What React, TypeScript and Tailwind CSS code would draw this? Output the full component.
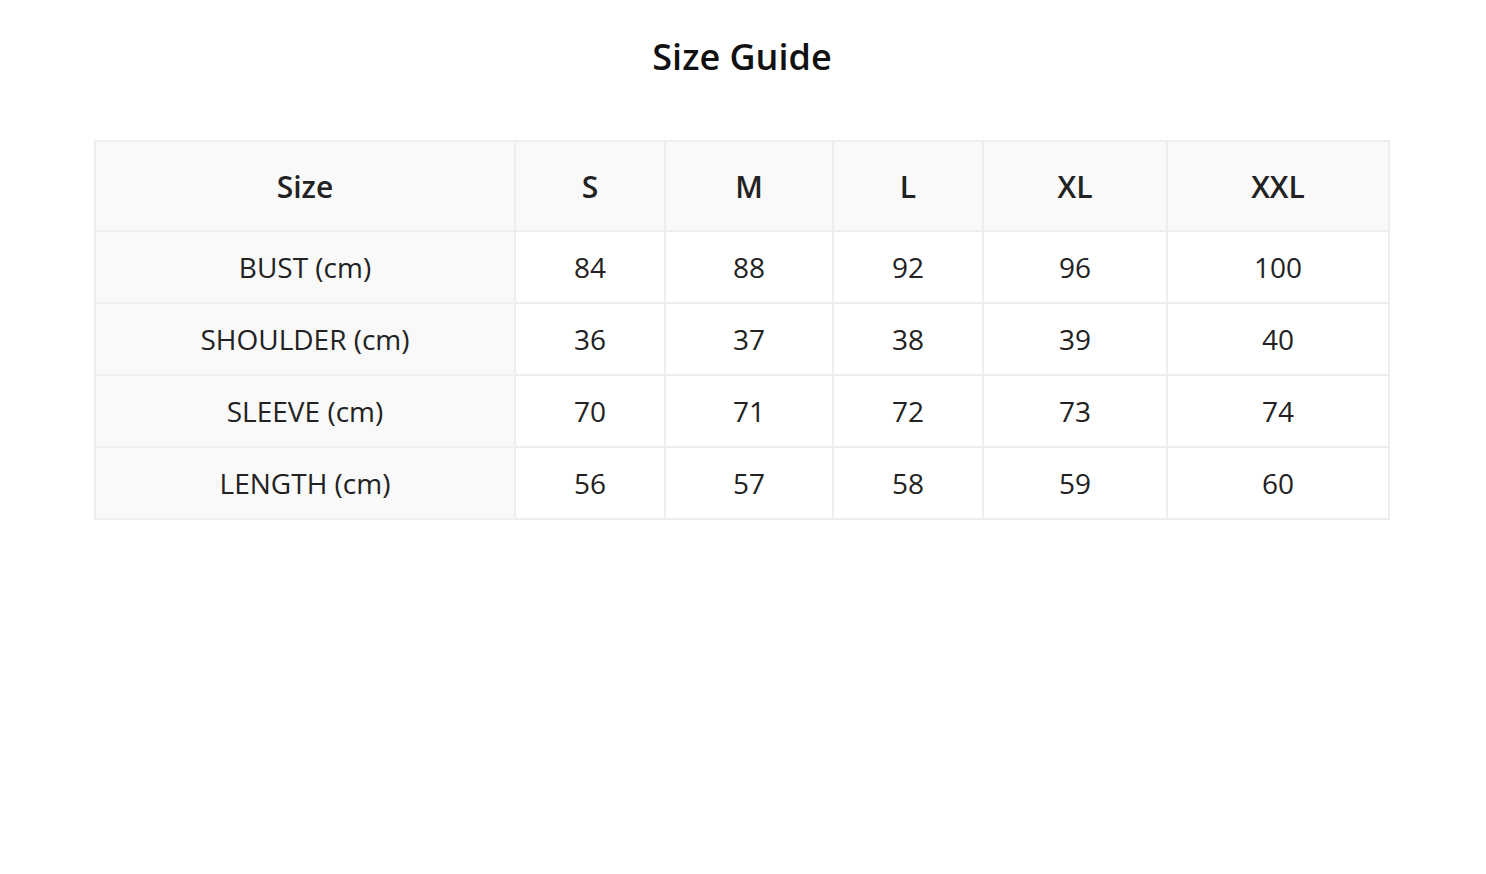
const sizes = ["S", "M", "L", "XL", "XXL"];

const rows: { label: string; values: number[] }[] = [
  { label: "BUST (cm)", values: [84, 88, 92, 96, 100] },
  { label: "SHOULDER (cm)", values: [36, 37, 38, 39, 40] },
  { label: "SLEEVE (cm)", values: [70, 71, 72, 73, 74] },
  { label: "LENGTH (cm)", values: [56, 57, 58, 59, 60] },
];

const colWidths = ["w-[420px]", "w-[150px]", "w-[168px]", "w-[150px]", "w-[184px]", "w-[222px]"];

export default function App() {
  return (
    <div className="min-h-screen bg-white pl-[94px] pr-[96px] pt-[32px] font-['Open_Sans',sans-serif]">
      <h1 className="text-center text-[36px] font-semibold leading-[50px] text-[#111]">Size Guide</h1>

      <table className="mt-[58px] w-full table-fixed border-separate border-spacing-0 border border-[#eeeeee] text-center text-[28px]">
        <colgroup>
          {colWidths.map((w, i) => (
            <col key={i} className={w} />
          ))}
        </colgroup>
        <thead>
          <tr className="h-[90px] bg-[#f9f9f9]">
            <th className="border border-[#eeeeee] text-[30px] font-semibold text-[#222]">Size</th>
            {sizes.map((s) => (
              <th key={s} className="border border-[#eeeeee] text-[30px] font-semibold text-[#222]">
                {s}
              </th>
            ))}
          </tr>
        </thead>
        <tbody>
          {rows.map((r) => (
            <tr key={r.label} className="h-[72px]">
              <td className="border border-[#eeeeee] bg-[#f9f9f9] text-[#222]">{r.label}</td>
              {r.values.map((v, i) => (
                <td key={i} className="border border-[#eeeeee] text-[#222]">
                  {v}
                </td>
              ))}
            </tr>
          ))}
        </tbody>
      </table>
    </div>
  );
}
